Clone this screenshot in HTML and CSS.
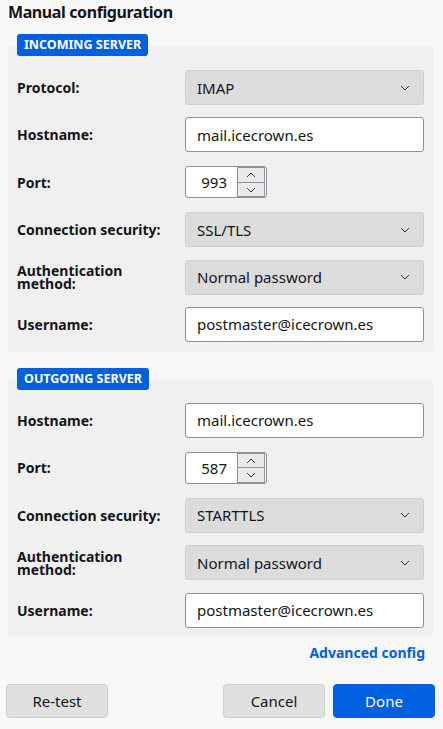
FILE: index.html
```html
<!DOCTYPE html>
<html>
<head>
<meta charset="utf-8">
<link rel="stylesheet" href="styles.css">
</head>
<body>
<div class="page">
  <h1 class="title">Manual configuration</h1>

  <section class="group">
    <div class="badge">INCOMING SERVER</div>
    <div class="panel panel-in">
      <div class="row"><span class="label">Protocol:</span><div class="select"><span>IMAP</span><svg class="chev" width="10" height="6" viewBox="0 0 10 6"><path d="M1 1l4 4 4-4" fill="none" stroke="#333" stroke-width="1"/></svg></div></div>
      <div class="row"><span class="label">Hostname:</span><div class="input">mail.icecrown.es</div></div>
      <div class="row"><span class="label">Port:</span><div class="spin"><span class="num">993</span><div class="arrows"><div class="arr"><svg width="10" height="6" viewBox="0 0 10 6"><path d="M1 5l4-4 4 4" fill="none" stroke="#333" stroke-width="1"/></svg></div><div class="arr"><svg width="10" height="6" viewBox="0 0 10 6"><path d="M1 1l4 4 4-4" fill="none" stroke="#333" stroke-width="1"/></svg></div></div></div></div>
      <div class="row"><span class="label">Connection security:</span><div class="select"><span>SSL/TLS</span><svg class="chev" width="10" height="6" viewBox="0 0 10 6"><path d="M1 1l4 4 4-4" fill="none" stroke="#333" stroke-width="1"/></svg></div></div>
      <div class="row"><span class="label">Authentication method:</span><div class="select"><span>Normal password</span><svg class="chev" width="10" height="6" viewBox="0 0 10 6"><path d="M1 1l4 4 4-4" fill="none" stroke="#333" stroke-width="1"/></svg></div></div>
      <div class="row"><span class="label">Username:</span><div class="input">postmaster@icecrown.es</div></div>
    </div>
  </section>

  <section class="group group-out">
    <div class="badge">OUTGOING SERVER</div>
    <div class="panel panel-out">
      <div class="row"><span class="label">Hostname:</span><div class="input">mail.icecrown.es</div></div>
      <div class="row"><span class="label">Port:</span><div class="spin"><span class="num">587</span><div class="arrows"><div class="arr"><svg width="10" height="6" viewBox="0 0 10 6"><path d="M1 5l4-4 4 4" fill="none" stroke="#333" stroke-width="1"/></svg></div><div class="arr"><svg width="10" height="6" viewBox="0 0 10 6"><path d="M1 1l4 4 4-4" fill="none" stroke="#333" stroke-width="1"/></svg></div></div></div></div>
      <div class="row"><span class="label">Connection security:</span><div class="select"><span>STARTTLS</span><svg class="chev" width="10" height="6" viewBox="0 0 10 6"><path d="M1 1l4 4 4-4" fill="none" stroke="#333" stroke-width="1"/></svg></div></div>
      <div class="row"><span class="label">Authentication method:</span><div class="select"><span>Normal password</span><svg class="chev" width="10" height="6" viewBox="0 0 10 6"><path d="M1 1l4 4 4-4" fill="none" stroke="#333" stroke-width="1"/></svg></div></div>
      <div class="row"><span class="label">Username:</span><div class="input">postmaster@icecrown.es</div></div>
    </div>
  </section>

  <div class="adv"><a class="link">Advanced config</a></div>

  <div class="buttons">
    <button class="btn">Re-test</button>
    <div class="spacer"></div>
    <button class="btn">Cancel</button>
    <button class="btn primary">Done</button>
  </div>
</div>
</body>
</html>
```
FILE: styles.css
```css
html, body { margin: 0; padding: 0; }
body {
  background: #f7f7f7;
  font-family: "Noto Sans", "Open Sans", sans-serif;
  color: #15141a;
  width: 443px;
  height: 729px;
  overflow: hidden;
}
.page { padding: 0 10px 0 8px; }
.title {
  margin: 0;
  padding-top: 1px;
  font-size: 16px;
  letter-spacing: -0.4px;
  font-weight: 700;
  line-height: 22px;
  height: 33px;
}
.group { display: flex; flex-direction: column; align-items: flex-start; }
.group-out { margin-top: 16px; }
.badge {
  margin-left: 9px;
  background: #0060df;
  color: #fff;
  font-size: 12.5px;
  font-weight: 700;
  line-height: 22px;
  height: 22px;
  padding: 0 7px 0 7px;
  border-radius: 3px;
  position: relative;
  z-index: 1;
  margin-bottom: -10px;
}
.panel {
  align-self: stretch;
  background: #f0f0f0;
  border-radius: 4px;
  display: flex;
  flex-direction: column;
  gap: 12.4px;
  padding: 24px 9px 10px 9px;
}
.panel-out { padding: 23px 9px 9px 9px; }
.row {
  display: grid;
  grid-template-columns: 168px 239px;
  align-items: center;
  height: 35px;
}
.label {
  font-size: 14px;
  font-weight: 700;
  line-height: 13px;
  max-width: 150px;
}
.select, .input {
  box-sizing: border-box;
  height: 35px;
  border-radius: 3px;
  font-size: 15px;
  display: flex;
  align-items: center;
  padding: 0 11px;
}
.select {
  background: #dcdcdc;
  border: 1px solid #cfcfcf;
  justify-content: space-between;
}
.select .chev { margin-right: 2px; }
.input {
  background: #fff;
  border: 1px solid #8f8f9d;
}
.spin {
  box-sizing: border-box;
  width: 82px;
  height: 32px;
  background: #fff;
  border: 1px solid #8f8f9d;
  border-radius: 3px;
  display: flex;
  align-items: center;
  justify-content: flex-end;
  padding-right: 1px;
}
.num { font-size: 15px; margin-right: 10px; }
.arrows {
  display: flex;
  flex-direction: column;
  width: 26px;
  height: 28px;
  border: 1px solid #8f8f9d;
}
.arr {
  flex: 1;
  background: #eaeaea;
  display: flex;
  align-items: center;
  justify-content: center;
}
.arr + .arr { border-top: 1px solid #8f8f9d; }
.adv {
  display: flex;
  justify-content: flex-end;
  padding: 7px 8px 0 0;
  height: 23px;
}
.link {
  color: #0060df;
  font-size: 14px;
  font-weight: 700;
  line-height: 18px;
}
.buttons {
  display: flex;
  margin-top: 17px;
  margin-left: -2px;
  margin-right: -2px;
  gap: 8px;
}
.spacer { flex: 1; }
.btn {
  box-sizing: border-box;
  width: 102px;
  height: 34px;
  border-radius: 4px;
  border: 1px solid #cfcfcf;
  background: #e0e0e0;
  color: #15141a;
  font-family: "Noto Sans", "Open Sans", sans-serif;
  font-size: 15px;
  padding: 0;
}
.btn.primary {
  background: #0060df;
  border-color: #0060df;
  color: #fff;
}
```
